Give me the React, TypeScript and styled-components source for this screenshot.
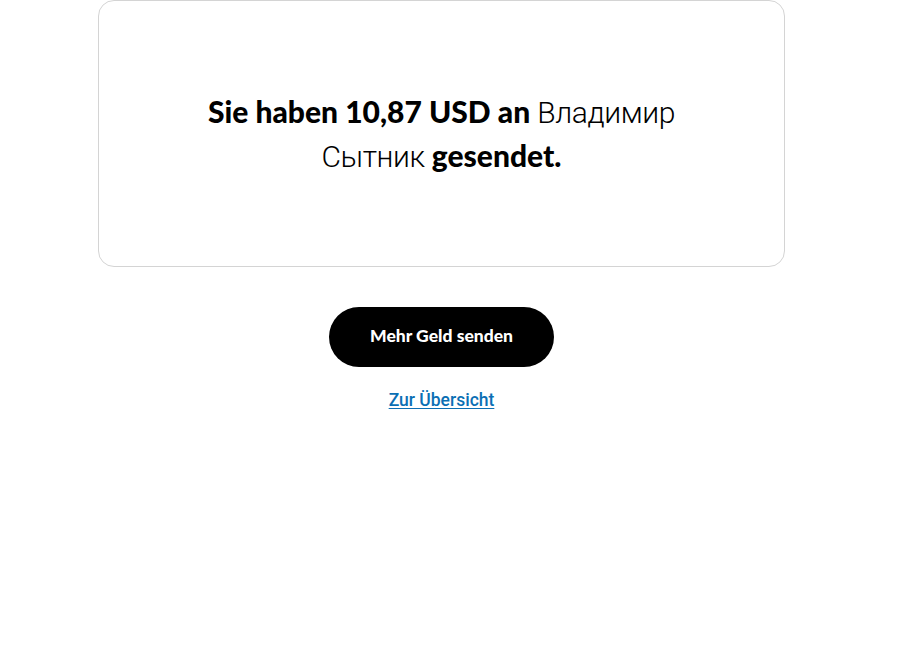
import React from "react";
import styled, { createGlobalStyle } from "styled-components";

const GlobalStyle = createGlobalStyle`
  html, body {
    margin: 0;
    padding: 0;
    background: #ffffff;
  }
  body {
    font-family: "Lato", "Roboto", "Liberation Sans", sans-serif;
    color: #000;
  }
`;

const Page = styled.div`
  width: 918px;
  display: flex;
  flex-direction: column;
  align-items: center;
  padding-right: 35px;
  box-sizing: border-box;
`;

const Card = styled.div`
  width: 687px;
  height: 267px;
  box-sizing: border-box;
  border: 1px solid #d4d4d4;
  border-radius: 16px;
  display: flex;
  align-items: center;
  justify-content: center;
  padding-top: 1px;
`;

const Message = styled.p`
  margin: 0;
  width: 480px;
  text-align: center;
  font-size: 30px;
  line-height: 42px;
  font-weight: 900;
  letter-spacing: 0;
`;

// Name renders in a lighter fallback face
const Name = styled.span`
  font-family: "Roboto", "Liberation Sans", sans-serif;
  font-weight: 300;
  letter-spacing: -0.4px;
`;

const Actions = styled.div`
  margin-top: 40px;
  display: flex;
  flex-direction: column;
  align-items: center;
  gap: 23px;
`;

const PrimaryButton = styled.button`
  width: 225px;
  height: 60px;
  padding: 0 0 3px;
  border: none;
  border-radius: 30px;
  background: #000;
  color: #fff;
  font-family: "Lato", sans-serif;
  font-weight: 900;
  font-size: 17.5px;
  letter-spacing: 0;
  cursor: pointer;
`;

const LinkText = styled.a`
  font-family: "Roboto", "Liberation Sans", sans-serif;
  font-weight: 500;
  font-size: 17.5px;
  color: #0b6fb4;
  text-decoration: underline;
  text-underline-offset: 2px;
  letter-spacing: 0;
`;

function App() {
  return (
    <>
      <GlobalStyle />
      <Page>
        <Card>
          <Message>
            Sie haben 10,87 USD an <Name>Владимир Сытник</Name> gesendet.
          </Message>
        </Card>
        <Actions>
          <PrimaryButton>Mehr Geld senden</PrimaryButton>
          <LinkText href="#">Zur Übersicht</LinkText>
        </Actions>
      </Page>
    </>
  );
}

export default App;
